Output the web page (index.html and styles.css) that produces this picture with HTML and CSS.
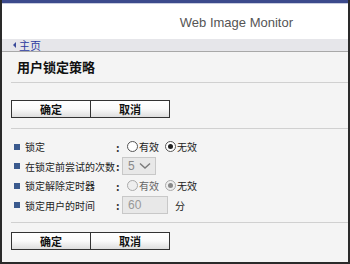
FILE: index.html
```html
<!DOCTYPE html>
<html>
<head>
<meta charset="utf-8">
<link rel="stylesheet" href="styles.css">
</head>
<body>
<div class="frame">
  <div class="topbar"></div>
  <div class="header"><span class="brand">Web Image Monitor</span></div>
  <div class="nav"><span class="tri"></span><a class="home">主页</a></div>
  <div class="content">
    <h1 class="title">用户锁定策略</h1>
    <div class="sep"></div>
    <div class="btns"><button class="btn">确定</button><button class="btn">取消</button></div>
    <div class="sep"></div>
    <div class="rows">
      <div class="row"><span class="bullet"></span><span class="label">锁定</span><span class="colon">:</span>
        <span class="radio"></span><span class="opt">有效</span><span class="radio on"></span><span class="opt">无效</span></div>
      <div class="row"><span class="bullet"></span><span class="label">在锁定前尝试的次数</span><span class="colon">:</span>
        <span class="select"><span>5</span><svg width="12" height="8" viewBox="0 0 12 8"><path d="M1 1.5 L6 6 L11 1.5" fill="none" stroke="#7a7a7a" stroke-width="1.4"/></svg></span></div>
      <div class="row"><span class="bullet"></span><span class="label">锁定解除定时器</span><span class="colon">:</span>
        <span class="radio dis"></span><span class="opt dim">有效</span><span class="radio on dis"></span><span class="opt">无效</span></div>
      <div class="row"><span class="bullet"></span><span class="label">锁定用户的时间</span><span class="colon">:</span>
        <span class="input">60</span><span class="opt unit">分</span></div>
    </div>
    <div class="sep"></div>
    <div class="btns bottom"><button class="btn">确定</button><button class="btn">取消</button></div>
  </div>
</div>
</body>
</html>
```
FILE: styles.css
```css
html, body { margin: 0; padding: 0; }
body { width: 350px; height: 264px; overflow: hidden; font-family: "Liberation Sans", "Noto Sans CJK SC", sans-serif; background: #f4f4f4; }
.frame { box-sizing: border-box; width: 350px; height: 264px; border-left: 2px solid #2a2a2a; border-right: 2px solid #2a2a2a; border-bottom: 2px solid #2a2a2a; display: flex; flex-direction: column; background: #f4f4f4; overflow: hidden; }
.frame > * { flex-shrink: 0; }
.topbar { height: 3px; background: #3c4a8c; border-bottom: 1px solid #c8cce0; }
.header { height: 35px; background: #fff; display: flex; align-items: center; justify-content: flex-end; padding-right: 55px; }
.brand { font-size: 13px; color: #555; padding-top: 2px; }
.nav { height: 12px; background: #e6e6ea; border-bottom: 1px solid #a8a8a8; display: flex; align-items: center; padding-left: 11px; }
.tri { width: 0; height: 0; border-top: 3px solid transparent; border-bottom: 3px solid transparent; border-right: 3px solid #3a4a9a; margin-right: 3px; }
.home { color: #2c3aa0; font-family: "Noto Sans CJK SC", sans-serif; font-size: 11px; line-height: 12px; }
.content { padding-left: 9px; }
.title { margin: 0; height: 30px; font-size: 13px; font-weight: bold; line-height: 30px; padding-left: 6px; font-family: "Noto Sans CJK SC", sans-serif; color: #111; }
.sep { height: 1px; background: #d0d0d0; }
.btns { display: flex; padding: 17px 0 10px 0; }
.btns.bottom { padding: 9px 0 0 0; }
.btn { width: 80px; height: 18px; border: 1px solid #333; background: linear-gradient(#ffffff, #fafafa 50%, #dedede); font-family: "Noto Sans CJK SC", sans-serif; font-size: 11px; font-weight: bold; color: #111; padding: 0; line-height: 15px; margin-right: -1px; }
.rows { padding: 8px 0 7px 3px; font-family: "Noto Sans CJK SC", sans-serif; font-size: 10px; color: #222; }
.row { display: flex; align-items: center; height: 19.5px; white-space: nowrap; }
.bullet { width: 6px; height: 6px; background: #3b5a8e; margin-right: 5px; }
.label { width: 91px; font-size: 10px; }
.colon { width: 6px; font-weight: bold; color: #333; font-size: 11px; }
.radio { box-sizing: border-box; width: 11px; height: 11px; border-radius: 50%; border: 1px solid #555; background: #fff; margin: 0 1px 0 5px; position: relative; }
.radio + .opt + .radio { margin-left: 6px; }
.radio.on::after { content: ""; position: absolute; left: 2px; top: 2px; width: 5px; height: 5px; border-radius: 50%; background: #222; }
.radio.dis { border-color: #aaa; background: #eee; }
.radio.on.dis::after { background: #888; }
.opt { font-size: 10px; }
.dim { color: #666; }
.select { box-sizing: border-box; width: 34px; height: 18px; border: 1px solid #c8c8c8; background: #e8e8e8; display: flex; align-items: center; justify-content: space-between; padding: 0 4px 0 5px; color: #888; font-family: "Liberation Sans", sans-serif; font-size: 12px; }
.input { box-sizing: border-box; width: 46px; height: 18px; border: 1px solid #c8c8c8; background: #e8e8e8; color: #999; padding-left: 5px; line-height: 16px; font-family: "Liberation Sans", sans-serif; font-size: 12px; margin-right: 7px; }
```
